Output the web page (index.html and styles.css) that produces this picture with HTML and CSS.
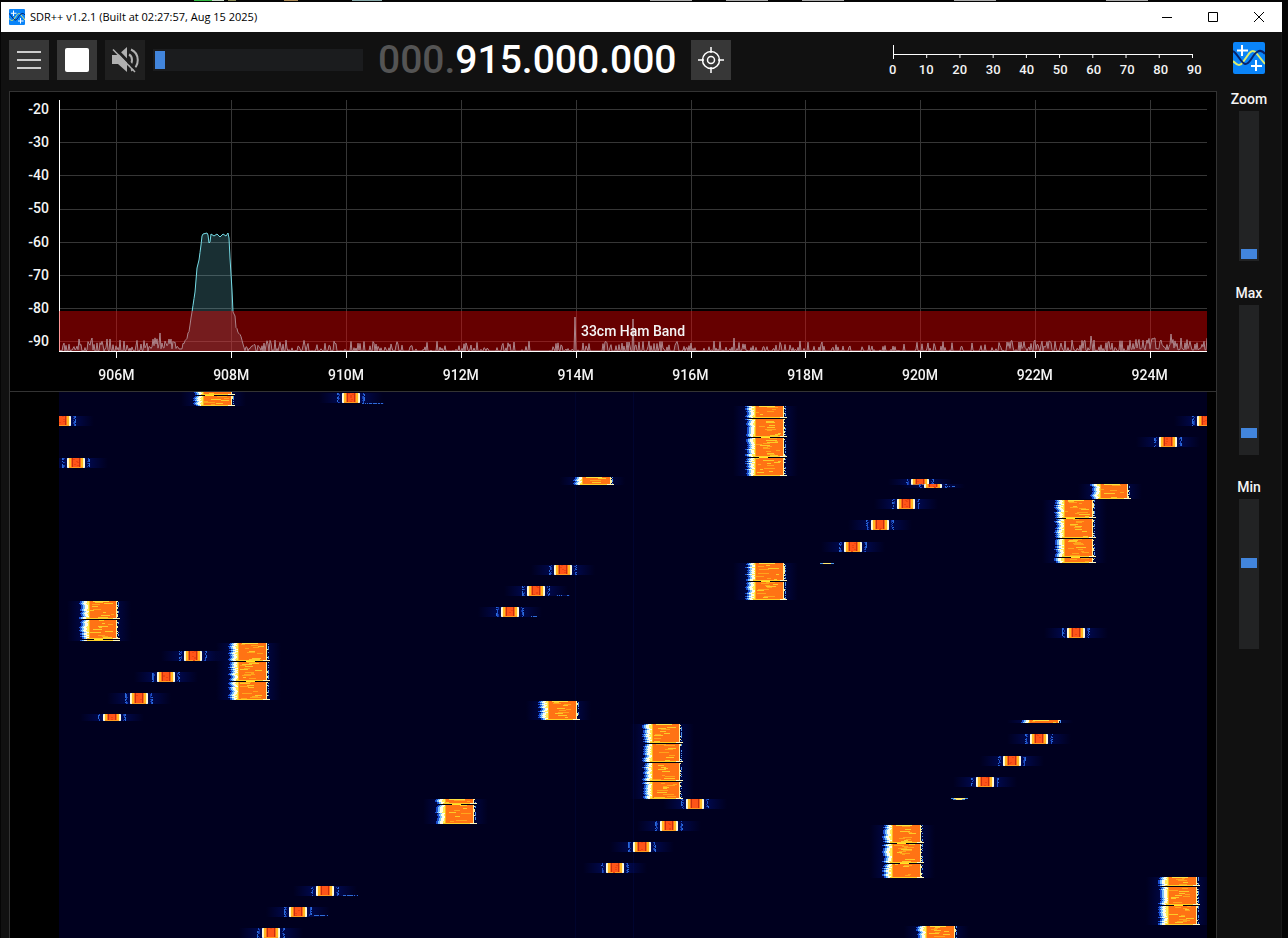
FILE: index.html
```html
<!DOCTYPE html>
<html lang="en">
<head>
<meta charset="utf-8">
<title>SDR++ v1.2.1</title>
<link rel="stylesheet" href="styles.css">
</head>
<body>
<svg class="defs" aria-hidden="true">
  <symbol id="logo" viewBox="0 0 32 32">
    <rect width="32" height="32" rx="2" fill="#0a84f8"/>
    <path d="M0 19C4 23 7 25 10 20L15 13C18 8 21 8 24 12L32 22" fill="none" stroke="#dcec70" stroke-width="2"/>
    <path d="M0 9C5 12 8 21 12 22C17 23 19 13 24 10C27 8 30 9 32 12" fill="none" stroke="#07236c" stroke-width="2"/>
    <path d="M9 3v11M4 8.500h11M23 18v11M18 24h11" fill="none" stroke="#fff" stroke-width="2"/>
  </symbol>
</svg>
<div class="desktop" aria-hidden="true"><i class="d1"></i><i class="d2"></i><i class="d3"></i><i class="d4"></i><i class="d5"></i><i class="d6"></i><i class="d7"></i><i class="d8"></i><i class="d9"></i></div>
<div class="window">
  <header class="titlebar">
    <svg class="title-icon"><use href="#logo"/></svg>
    <span class="title">SDR++ v1.2.1 (Built at 02:27:57, Aug 15 2025)</span>
    <button class="win-btn" aria-label="Minimize"><svg width="10" height="10"><path d="M0 5.500h10"/></svg></button>
    <button class="win-btn" aria-label="Maximize"><svg width="10" height="10"><path d="M.5 .5h9v9h-9z"/></svg></button>
    <button class="win-btn" aria-label="Close"><svg width="10" height="10"><path d="M0 0L10 10M10 0L0 10"/></svg></button>
  </header>
  <div class="app">
    <div class="toolbar">
      <button class="tool" aria-label="Menu"><svg width="40" height="40"><path d="M8 12h24M8 20h24M8 28h24" stroke="#fff" stroke-width="1.500"/></svg></button>
      <button class="tool" aria-label="Stop"><svg width="40" height="40"><rect x="8" y="8" width="24" height="24" rx="2" fill="#fff"/></svg></button>
      <button class="tool muted" aria-label="Unmute"><svg width="40" height="40"><path d="M7 15h6l9-8v25l-9-8H7z" fill="#b0b0b0"/><path d="M24 14.500c4 2 4 9 0 11M26 9.500c9 4 9 17 0 21" fill="none" stroke="#b0b0b0" stroke-width="2"/><path d="M10 8L32 31" stroke="#202020" stroke-width="3"/><path d="M8 9.500L30 32" stroke="#b0b0b0" stroke-width="1.500"/></svg></button>
      <input class="volume" type="range" min="0" max="100" value="0" aria-label="Volume">
      <output class="freq"><span class="dim">000.</span>915.000.000</output>
      <button class="tool" aria-label="Center tuning"><svg width="40" height="40" fill="none" stroke="#fff" stroke-width="1.500"><circle cx="20" cy="20" r="8.500"/><circle cx="20" cy="20" r="3.500"/><path d="M20 7v6M20 27v6M7 20h6M27 20h6"/></svg></button>
      <div class="meter">
        <div class="meter-axis"></div>
        <div class="meter-labels"><span>0</span><span>10</span><span>20</span><span>30</span><span>40</span><span>50</span><span>60</span><span>70</span><span>80</span><span>90</span></div>
      </div>
      <svg class="brand"><use href="#logo"/></svg>
    </div>
    <div class="body">
      <main class="display">
        <section class="spectrum">
          <div class="db"><span>-20</span><span>-30</span><span>-40</span><span>-50</span><span>-60</span><span>-70</span><span>-80</span><span>-90</span></div>
          <div class="plot">
            <canvas id="fft"></canvas>
            <div class="band">33cm Ham Band</div>
          </div>
          <div class="mhz"><span>906M</span><span>908M</span><span>910M</span><span>912M</span><span>914M</span><span>916M</span><span>918M</span><span>920M</span><span>922M</span><span>924M</span></div>
        </section>
        <section class="waterfall"><canvas id="fall"></canvas></section>
      </main>
      <aside class="side">
        <label>Zoom<input type="range" min="0" max="100" value="0"></label>
        <label>Max<input type="range" min="0" max="100" value="11"></label>
        <label>Min<input type="range" min="0" max="100" value="58"></label>
      </aside>
    </div>
  </div>
</div>
<script src="draw.js"></script>
</body>
</html>
```
FILE: styles.css
```css
* { box-sizing: border-box; }
body {
  margin: 0;
  height: 100vh;
  overflow: hidden;
  display: flex;
  flex-direction: column;
  background: #050505;
  color: #f4f4f4;
  font: 500 14px/16px Roboto, "Open Sans", sans-serif;
}
button { border: 0; padding: 0; background: none; cursor: pointer; }
svg, canvas { display: block; }
.defs { position: absolute; width: 0; height: 0; }
.desktop { height: 2px; flex: none; display: flex; background: #050505; }
.desktop i { height: 1px; background: #aaa; }
.desktop .d1 { margin-left: 194px; width: 30px; background: linear-gradient(90deg, #3b4 60%, #cdc 60%); }
.desktop .d2 { margin-left: 4px; width: 8px; background: #885; }
.desktop .d3 { margin-left: 48px; width: 14px; background: #a85; }
.desktop .d4 { margin-left: 54px; width: 30px; background: #8aa; }
.d5 { margin-left: 268px; width: 42px; }
.d6 { margin-left: 34px; width: 42px; }
.d7 { margin-left: 34px; width: 42px; }
.d8 { margin-left: 110px; width: 42px; }
.d9 { margin-left: 110px; width: 42px; }
.window { flex: 1; min-height: 0; display: flex; flex-direction: column; margin: 0 6px 0 1px; }
.titlebar {
  flex: none;
  height: 30px;
  display: flex;
  align-items: center;
  background: #fff;
  color: #000;
  font: 400 11px/16px "Open Sans", "Noto Sans", sans-serif;
}
.title-icon { width: 16px; height: 16px; margin: 0 5px 0 8px; }
.title { flex: 1; }
.win-btn { width: 46px; height: 29px; display: flex; align-items: center; justify-content: center; }
.win-btn path { fill: none; stroke: #000; }
.app { flex: 1; min-height: 0; display: flex; flex-direction: column; background: #111; border-right: 1px solid #191919; }
.toolbar { flex: none; height: 59px; padding: 8px 16px 0 8px; display: flex; align-items: flex-start; gap: 8px; }
.tool { width: 40px; height: 40px; background: #373737; }
.tool.muted { background: #1f1f1f; }
input[type="range"] { appearance: none; margin: 0; background: #1b1c1e; padding: 2px; }
input[type="range"]::-webkit-slider-thumb { appearance: none; background: #4285dc; }
.toolbar .volume { width: 210px; height: 22px; margin-top: 9px; }
.volume::-webkit-slider-thumb { width: 10px; height: 18px; }
.freq { margin: 0 6px 0 7px; font-size: 39px; line-height: 40px; white-space: nowrap; color: #fff; }
.dim { color: #545454; }
.meter { width: 349px; margin: 5px 0 0 auto; padding-right: 14px; }
.meter-axis {
  height: 14px;
  margin: 0 17px;
  border-left: 1px solid #fff;
  background:
    linear-gradient(#fff, #fff) 0 9px / 100% 1px no-repeat,
    linear-gradient(90deg, #fff 1px, transparent 1px) -1px 9px / 33.3px 4px repeat-x;
  background-size: 100% 1px, calc(100% / 9) 4px;
  border-right: 1px solid transparent;
  background-clip: border-box;
}
.meter-labels { display: grid; grid-template-columns: repeat(10, 1fr); text-align: center; font-size: 13px; margin-top: 3px; }
.brand { width: 32px; height: 32px; margin-top: 2px; }
.body { flex: 1; min-height: 0; display: flex; }
.display {
  flex: 1;
  min-width: 0;
  margin-left: 8px;
  display: flex;
  flex-direction: column;
  background: #000;
  border: 1px solid #333;
  border-bottom: 0;
}
.spectrum {
  flex: none;
  height: 300px;
  display: grid;
  grid-template-columns: 49px 1fr;
  grid-template-rows: 266px 33px;
  padding-right: 9px;
  border-bottom: 1px solid #333;
}
.db { display: grid; grid-template-rows: repeat(8, 1fr); align-items: center; text-align: right; padding-right: 10px; }
.plot { display: grid; padding-top: 8px; align-items: start; min-width: 0; }
.plot > * { grid-area: 1 / 1; }
#fft { width: 100%; height: 258px; }
.band {
  height: 40px;
  margin-top: 211px;
  display: flex;
  align-items: center;
  justify-content: center;
  background: rgba(255, 0, 0, .4);
}
.mhz { grid-column: 2; display: grid; grid-template-columns: repeat(10, 1fr); text-align: center; padding-top: 9px; }
.waterfall { flex: 1; min-height: 0; padding: 0 9px 0 49px; }
#fall { width: 100%; height: 100%; }
.side { flex: none; width: 64px; display: flex; flex-direction: column; align-items: center; gap: 24px; }
.side label { display: flex; flex-direction: column; align-items: center; gap: 4px; }
.side input[type="range"] { writing-mode: vertical-lr; direction: rtl; width: 20px; height: 150px; background: #222324; }
.side input::-webkit-slider-thumb { width: 16px; height: 10px; }
```
FILE: draw.js
```js
// Plot coordinates are expressed on a 1148-unit wide, 20 MHz span.
const SPAN = 1148;
let seed = 7;
function rnd() {
  seed = (seed * 1664525 + 1013904223) >>> 0;
  return seed / 4294967296;
}
function prepare(id) {
  const c = document.getElementById(id);
  c.width = c.clientWidth;
  c.height = c.clientHeight;
  const g = c.getContext('2d');
  return { g, w: c.width, h: c.height, k: c.width / SPAN };
}

function drawSpectrum() {
  const { g, w, k } = prepare('fft');
  const base = 251;
  seed = 11;
  g.fillStyle = '#363636';
  for (let i = 0; i < 8; i++) g.fillRect(0, Math.round(9 + i * 33.2), w, 1);
  for (let i = 0; i < 10; i++) g.fillRect(Math.round((57 + i * 114.9) * k), 0, 1, base);

  // Signal outline: [x, y] in plot units.
  const peak = [[112, 249], [118, 246], [124, 243], [127, 240], [130, 230], [133, 212], [136, 192], [138, 168],
    [140, 160], [142, 145], [143, 136], [144, 134], [148, 133], [149, 135], [150, 143], [151, 142], [152, 134],
    [155, 136], [158, 134], [161, 137], [164, 134], [167, 136], [169, 133], [170, 138], [171, 158], [173, 190],
    [174, 212], [176, 216], [177, 228], [179, 232], [181, 235], [184, 244], [186, 251]];
  const spikes = { 20: 239, 33: 238, 48: 239, 51: 239, 65: 241, 101: 233, 106: 241, 112: 239, 516: 217, 574: 219, 568: 242, 590: 241, 675: 238, 763: 242, 1032: 236, 1102: 240, 1112: 234, 1096: 238, 1006: 241, 1049: 242, 1088: 240, 1122: 238, 960: 242 };
  const pts = [];
  for (let x = 0; x <= SPAN; x += 1) {
    let y;
    if (x >= 124 && x <= 186) {
      let j = 1;
      while (peak[j][0] < x) j++;
      const a = peak[j - 1], b = peak[j];
      y = a[1] + (b[1] - a[1]) * (x - a[0]) / (b[0] - a[0]);
      if (y > 220) y += rnd() * 4 - 2;
    } else {
      const quiet = x > 250 && x < 940;
      const rise = x > 90 && x < 124 ? 3 : (x > 1070 ? 2 : 0);
      y = quiet ? base + 2 - Math.pow(rnd(), 4) * 12 : base + 1 - rise - Math.pow(rnd(), 1.8) * 12;
      if (spikes[x]) y = spikes[x];
    }
    pts.push([x * k, Math.min(y, base)]);
  }
  g.beginPath();
  g.moveTo(0, base);
  pts.forEach(p => g.lineTo(p[0], p[1]));
  g.lineTo(w, base);
  g.closePath();
  g.fillStyle = 'rgba(120,220,240,.21)';
  g.fill();
  g.beginPath();
  pts.forEach(p => g.lineTo(p[0], p[1]));
  g.strokeStyle = '#76dce6';
  g.lineWidth = 1;
  g.stroke();
  g.fillStyle = '#fff';
  g.fillRect(0, 0, 1, base + 1);
  g.fillRect(0, base, w, 1);
  for (let i = 0; i < 10; i++) g.fillRect(Math.round((57 + i * 114.9) * k), base, 1, 7);
}

// Wide transmissions: left, right, top, bottom, dropout rows.
const wide = [
  [136, 173, 0, 14, [3]], [688, 725, 14, 84, [26, 45, 65]], [515, 552, 85, 93, []],
  [1033, 1069, 92, 107, []], [997, 1034, 108, 171, [126, 146, 165]], [688, 725, 171, 208, [189]],
  [22, 58, 209, 249, [227, 247]], [171, 208, 251, 308, [269, 289]], [481, 518, 309, 328, []],
  [585, 621, 332, 407, [351, 370, 389]], [378, 415, 407, 432, [412]], [825, 862, 433, 486, [451, 471]],
  [1101, 1138, 485, 533, [494, 513]], [859, 896, 534, 560, []], [962, 1000, 328, 331, []]
];
// Narrow hops: centre, top, bottom.
const hops = [
  [3, 24, 34], [17, 66, 76], [292, 1, 11], [504, 173, 183], [477, 194, 204], [451, 215, 225],
  [134, 259, 269], [107, 280, 290], [80, 301, 312], [53, 322, 329], [861, 87, 93], [874, 92, 96],
  [847, 107, 117], [821, 128, 138], [794, 150, 160], [1109, 45, 55], [1147, 24, 34],
  [1017, 236, 246], [980, 342, 352], [953, 364, 374], [926, 385, 395], [636, 407, 417],
  [610, 429, 439], [583, 450, 460], [556, 471, 481], [266, 494, 504], [239, 515, 525], [212, 536, 546]
];
// Single-row traces: left, width, y, bright.
const traces = [[761, 14, 171, 1], [892, 17, 406, 1], [894, 12, 407, 1], [303, 22, 11, 0], [497, 14, 203, 0],
  [282, 17, 503, 0], [255, 14, 523, 0], [886, 10, 94, 0], [472, 6, 224, 0]];

function drawWaterfall() {
  const { g, w, h, k } = prepare('fall');
  seed = 29;
  g.fillStyle = '#00001f';
  g.fillRect(0, 0, w, h);
  const R = (x, y, a, b, c) => { g.fillStyle = c; g.fillRect(x, y, a, b); };
  const soft = (l, r, t, b, alpha) => {
    const s = g.createLinearGradient(l, 0, r, 0);
    s.addColorStop(0, 'rgba(0,20,150,0)');
    s.addColorStop(.5, 'rgba(0,30,180,' + alpha + ')');
    s.addColorStop(1, 'rgba(0,20,150,0)');
    g.fillStyle = s;
    g.fillRect(l, t, r - l, b - t);
  };
  R(Math.round(516 * k), 0, 1, h, '#00042e');
  R(Math.round(574 * k), 0, 1, h, '#000430');

  for (const [l0, r0, t, b, gaps] of wide) {
    const l = Math.round(l0 * k), r = l + r0 - l0;
    soft(l - 14, r + 14, t, b, .6);
    for (let y = t; y < b && y < h; y++) {
      const v = rnd();
      const j = v < .2 ? 2 : (v > .8 ? -1 : (v > .5 ? 1 : 0));
      if (gaps.includes(y)) {
        R(l + 1, y, r - l + 2, 1, '#00000c');
        if (rnd() < .5) R(l + 9 + Math.floor(rnd() * 8), y, 9, 1, '#ffe626');
        continue;
      }
      R(l - 1 + j, y, 5, 1, '#1a4fd0');
      R(l + 1 + j, y, 3, 1, '#7ec4ff');
      R(l + 3 + j, y, 6 - j, 1, '#fffde8');
      R(l + 6 + j, y, 3 - j, 1, '#ffee58');
      R(l + 8, y, r - l - 9, 1, '#ff7314');
      R(l + 8, y, 1, 1, '#ffb41c');
      R(r - 1, y, rnd() < .3 ? 2 : 1, 1, '#fff3a0');
      if (rnd() < .5) R(r + 1, y, 1, 1, '#4e92f0');
      if (gaps.includes(y + 1) || (y === b - 1 && b - t > 4)) {
        R(l + 6, y, r - l - 5, 1, '#ffd028');
        R(r - 4, y, 7, 1, '#fff8c0');
      } else if (y === t && t > 0) {
        R(l + 12, y, 16, 1, '#ffe040');
      } else if (rnd() < .62) {
        const n = 3 + Math.floor(rnd() * 9);
        R(l + 9 + Math.floor(rnd() * (r - l - 11 - n)), y, n, 1, rnd() < .55 ? '#ffa51c' : '#fccb28');
      }
    }
  }

  for (const [c0, t, b] of hops) {
    const c = Math.round(c0 * k), n = b - t;
    soft(c - 32, c + 32, t, b, .55);
    R(c - 9, t, 18, n, '#b8dcff');
    R(c - 9, t + 1, 18, n - 2, '#fffbe0');
    R(c - 8, t, 16, n, '#fff6c0');
    R(c - 7, t, 14, n, '#ffb820');
    R(c - 5, t, 10, n, '#ff6a18');
    R(c - 3, t, 6, n, '#ff5418');
    R(c - 4, t, 1, n, '#c83010');
    R(c + 3, t, 1, n, '#c83010');
    R(c - 7, b - 1, 14, 1, '#ff9a20');
    for (let y = t; y < b; y++) {
      for (const s of [-1, 1]) {
        const x = s < 0 ? c - 1 : c;
        if (rnd() < .7) R(x + s * 12, y, 1, 1, '#1f52c8');
        if (rnd() < .6) R(x + s * 13, y, 1, 1, '#2d6cd8');
        if (rnd() < .4) R(x + s * 11, y, 1, 1, '#1436a4');
      }
      if (rnd() < .3) R(c - 3 + Math.floor(rnd() * 5), y, 2, 1, '#f04410');
    }
  }

  for (const [x0, n, y, bright] of traces) {
    const x = Math.round(x0 * k);
    for (let i = 0; i < n; i++) {
      const mid = i > 2 && i < n - 3;
      R(x + i, y, 1, 1, bright ? (mid ? '#ffe870' : '#4690e8') : (rnd() < .7 ? '#2e6cd8' : '#000a50'));
    }
  }
}

function draw() {
  drawSpectrum();
  drawWaterfall();
}
draw();
window.addEventListener('resize', draw);
```
